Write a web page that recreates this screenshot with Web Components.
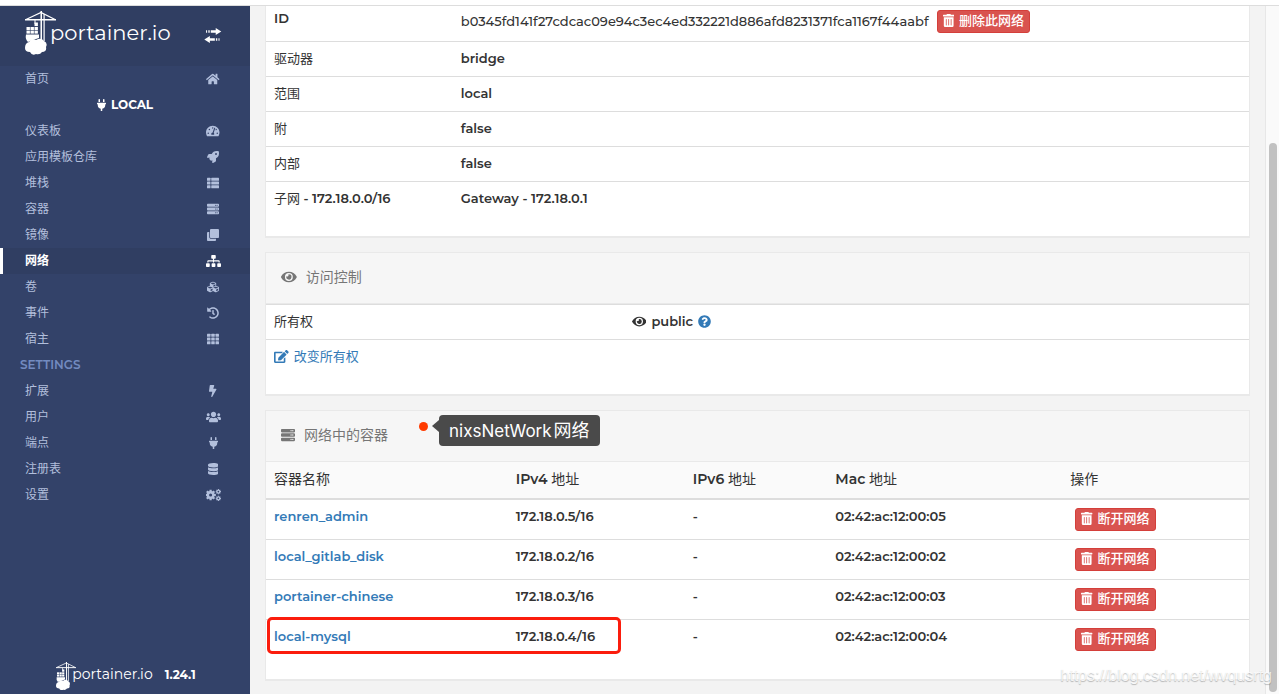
<!DOCTYPE html>
<html lang="zh-CN">
<head>
<meta charset="utf-8">
<title>Portainer</title>
<style>
html, body { margin: 0; height: 100%; }
body { font: 500 13px/16px Montserrat, Inter, "Noto Sans CJK SC", sans-serif; color: #333; background: #fff; overflow: hidden; }
.zh { font-size: 18px; margin-left: 2px; }
</style>
</head>
<body>
<app-shell>
  <side-bar slot="side"></side-bar>
  <info-card><network-details></network-details></info-card>
  <info-card icon="eye" heading="访问控制"><access-panel></access-panel></info-card>
  <info-card icon="server" heading="网络中的容器">
    <note-callout slot="note">nixsNetWork<span class="zh">网络</span></note-callout>
    <container-table></container-table>
  </info-card>
  <water-mark slot="mark">https://blog.csdn.net/wvqusrtg</water-mark>
</app-shell>
<script>
const define = (name, render) => customElements.define(name, class extends HTMLElement {
  connectedCallback() {
    if (this.shadowRoot) return;
    this.attachShadow({ mode: 'open' }).innerHTML = render(this);
  }
});

const gear = (cx, cy, r, w, t) => {
  let s = `<circle cx="${cx}" cy="${cy}" r="${r}" fill="none" stroke="currentColor" stroke-width="${w}"/>`;
  for (let i = 0; i < 8; i++) s += `<rect x="${cx - t / 2}" y="${cy - r - w / 2 - t * 0.6}" width="${t}" height="${t}" transform="rotate(${i * 45} ${cx} ${cy})"/>`;
  return s;
};
let grid = '';
for (let r = 0; r < 3; r++) for (let c = 0; c < 3; c++) grid += `<rect x="${c * 181}" y="${32 + r * 160}" width="149" height="128" rx="24"/>`;

const p = d => `<path d="${d}"/>`;
const ICONS = {
  eye: [576, p('M572.52 241.4C518.29 135.59 410.93 64 288 64S57.68 135.64 3.48 241.41a32.35 32.35 0 0 0 0 29.19C57.71 376.41 165.07 448 288 448s230.32-71.64 284.52-177.41a32.35 32.35 0 0 0 0-29.19zM288 400a144 144 0 1 1 144-144 143.93 143.93 0 0 1-144 144zm0-240a95.31 95.31 0 0 0-25.31 3.79 47.85 47.85 0 0 1-66.9 66.9A95.78 95.78 0 1 0 288 160z')],
  question: [512, p('M504 256c0 136.997-111.043 248-248 248S8 392.997 8 256C8 119.083 119.043 8 256 8s248 111.083 248 248zM262.655 90c-54.497 0-89.255 22.957-116.549 63.758-3.536 5.286-2.353 12.415 2.715 16.258l34.699 26.31c5.205 3.947 12.621 3.008 16.665-2.122 17.864-22.658 30.113-35.797 57.303-35.797 20.429 0 45.698 13.148 45.698 32.958 0 14.976-12.363 22.667-32.534 33.976C247.128 238.528 216 254.941 216 296v4c0 6.627 5.373 12 12 12h56c6.627 0 12-5.373 12-12v-1.333c0-28.462 83.186-29.647 83.186-106.667 0-58.002-60.165-102-116.531-102zM256 338c-25.365 0-46 20.635-46 46 0 25.364 20.635 46 46 46s46-20.636 46-46c0-25.365-20.635-46-46-46z')],
  edit: [576, p('M402.6 83.2l90.2 90.2c3.8 3.8 3.8 10 0 13.8L274.4 405.6l-92.8 10.3c-12.4 1.4-22.9-9.1-21.5-21.5l10.3-92.8L388.8 83.2c3.8-3.8 10-3.8 13.8 0zm162-22.9l-48.8-48.8c-15.2-15.2-39.9-15.2-55.2 0l-35.4 35.4c-3.8 3.8-3.8 10 0 13.8l90.2 90.2c3.8 3.8 10 3.8 13.8 0l35.4-35.4c15.2-15.3 15.2-40 0-55.2zM384 346.2V448H64V128h229.8c3.2 0 6.2-1.3 8.5-3.5l40-40c7.6-7.6 2.2-20.5-8.5-20.5H48C21.5 64 0 85.5 0 112v352c0 26.5 21.5 48 48 48h352c26.5 0 48-21.5 48-48V306.2c0-10.7-12.9-16-20.5-8.5l-40 40c-2.2 2.3-3.5 5.3-3.5 8.5z')],
  home: [576, p('M280.37 148.26L96 300.11V464a16 16 0 0 0 16 16l112.06-.29a16 16 0 0 0 15.92-16V368a16 16 0 0 1 16-16h64a16 16 0 0 1 16 16v95.64a16 16 0 0 0 16 16.05L464 480a16 16 0 0 0 16-16V300L295.67 148.26a12.19 12.19 0 0 0-15.3 0zM571.6 251.47L488 182.56V44.05a12 12 0 0 0-12-12h-56a12 12 0 0 0-12 12v72.61L318.47 43a48 48 0 0 0-61 0L4.34 251.47a12 12 0 0 0-1.6 16.9l25.5 31A12 12 0 0 0 45.15 301l235.22-193.74a12.19 12.19 0 0 1 15.3 0L530.9 301a12 12 0 0 0 16.9-1.6l25.5-31a12 12 0 0 0-1.7-16.93z')],
  plug: [384, p('M320,32a32,32,0,0,0-64,0v96h64Zm48,128H16A16,16,0,0,0,0,176v32a16,16,0,0,0,16,16H32v32A160.07,160.07,0,0,0,160,412.8V512h64V412.8A160.07,160.07,0,0,0,352,256V224h16a16,16,0,0,0,16-16V176A16,16,0,0,0,368,160ZM128,32a32,32,0,0,0-64,0v96h64Z')],
  gauge: [576, p('M288 32C128.94 32 0 160.94 0 320c0 52.8 14.25 102.26 39.06 144.8 5.61 9.62 16.3 15.2 27.44 15.2h443c11.14 0 21.83-5.58 27.44-15.2C561.75 422.26 576 372.8 576 320c0-159.06-128.94-288-288-288zm0 64c14.71 0 26.58 10.13 30.32 23.65-1.11 2.26-2.64 4.23-3.45 6.67l-9.22 27.67c-5.13 3.49-10.97 6.01-17.64 6.01-17.67 0-32-14.33-32-32S270.33 96 288 96zM96 384c-17.67 0-32-14.33-32-32s14.33-32 32-32 32 14.33 32 32-14.33 32-32 32zm48-160c-17.67 0-32-14.33-32-32s14.33-32 32-32 32 14.33 32 32-14.33 32-32 32zm246.77-72.41l-61.33 184C343.13 347.33 352 364.54 352 384c0 11.72-3.38 22.55-8.88 32H232.88c-5.5-9.45-8.88-20.28-8.88-32 0-33.94 26.5-61.43 59.9-63.59l61.34-184.01c4.17-12.56 17.73-19.45 30.36-15.17 12.57 4.19 19.35 17.79 15.17 30.36zm14.66 57.2l15.52-46.55c3.47-1.29 7.13-2.23 11.05-2.23 17.67 0 32 14.33 32 32s-14.33 32-32 32c-11.38-.01-20.89-6.28-26.57-15.22zM480 384c-17.67 0-32-14.33-32-32s14.33-32 32-32 32 14.33 32 32-14.33 32-32 32z')],
  rocket: [512, p('M505.12 19.09c-1.19-5.53-6.66-11-12.21-12.19C460.72 0 435.51 0 410.41 0 307.18 0 245.27 55.2 199.05 128H94.84c-16.35.02-35.56 11.88-42.89 26.48L2.52 253.3A28.4 28.4 0 0 0 0 264a24 24 0 0 0 24 24h103.82l-22.48 22.47c-11.36 11.36-13 32.26 0 45.25l50.91 50.9c11.15 11.19 32.15 13.16 45.27 0L224 384.16V488a24 24 0 0 0 24 24 28.56 28.56 0 0 0 10.71-2.52l98.73-49.39c14.63-7.29 26.5-26.5 26.5-42.86V312.8c72.6-46.31 128.04-108.41 128.04-211.1.09-25.2.09-50.4-6.86-82.61zM384.04 168A40 40 0 1 1 424.05 128 40.02 40.02 0 0 1 384.04 168z')],
  list: [512, '<rect y="32" width="149" height="128" rx="24"/><rect y="192" width="149" height="128" rx="24"/><rect y="352" width="149" height="128" rx="24"/><rect x="181" y="32" width="331" height="128" rx="24"/><rect x="181" y="192" width="331" height="128" rx="24"/><rect x="181" y="352" width="331" height="128" rx="24"/>'],
  server: [512, p('M480 160H32c-17.673 0-32-14.327-32-32V64c0-17.673 14.327-32 32-32h448c17.673 0 32 14.327 32 32v64c0 17.673-14.327 32-32 32zm-48-88c-13.255 0-24 10.745-24 24s10.745 24 24 24 24-10.745 24-24-10.745-24-24-24zm-64 0c-13.255 0-24 10.745-24 24s10.745 24 24 24 24-10.745 24-24-10.745-24-24-24zm112 248H32c-17.673 0-32-14.327-32-32v-64c0-17.673 14.327-32 32-32h448c17.673 0 32 14.327 32 32v64c0 17.673-14.327 32-32 32zm-48-88c-13.255 0-24 10.745-24 24s10.745 24 24 24 24-10.745 24-24-10.745-24-24-24zm-64 0c-13.255 0-24 10.745-24 24s10.745 24 24 24 24-10.745 24-24-10.745-24-24-24zm112 248H32c-17.673 0-32-14.327-32-32v-64c0-17.673 14.327-32 32-32h448c17.673 0 32 14.327 32 32v64c0 17.673-14.327 32-32 32zm-48-88c-13.255 0-24 10.745-24 24s10.745 24 24 24 24-10.745 24-24-10.745-24-24-24zm-64 0c-13.255 0-24 10.745-24 24s10.745 24 24 24 24-10.745 24-24-10.745-24-24-24z')],
  clone: [512, p('M464 0c26.51 0 48 21.49 48 48v288c0 26.51-21.49 48-48 48H176c-26.51 0-48-21.49-48-48V48c0-26.51 21.49-48 48-48h288M176 416c-44.112 0-80-35.888-80-80V128H48c-26.51 0-48 21.49-48 48v288c0 26.51 21.49 48 48 48h288c26.51 0 48-21.49 48-48v-48H176z')],
  sitemap: [640, p('M128 352H32c-17.67 0-32 14.33-32 32v96c0 17.67 14.33 32 32 32h96c17.67 0 32-14.33 32-32v-96c0-17.67-14.33-32-32-32zm-24-80h192v48h48v-48h192v48h48v-57.59c0-21.17-17.23-38.41-38.41-38.41H344v-64h40c17.67 0 32-14.33 32-32V32c0-17.67-14.33-32-32-32H256c-17.67 0-32 14.33-32 32v96c0 17.67 14.33 32 32 32h40v64H94.41C73.23 224 56 241.23 56 262.41V320h48v-48zm264 80h-96c-17.67 0-32 14.33-32 32v96c0 17.67 14.33 32 32 32h96c17.67 0 32-14.33 32-32v-96c0-17.67-14.33-32-32-32zm240 0h-96c-17.67 0-32 14.33-32 32v96c0 17.67 14.33 32 32 32h96c17.67 0 32-14.33 32-32v-96c0-17.67-14.33-32-32-32z')],
  cubes: [512, p('M488.6 250.2L392 214V105.5c0-15-9.3-28.4-23.4-33.7l-100-37.5c-8.1-3.1-17.1-3.1-25.3 0l-100 37.5c-14.1 5.3-23.4 18.7-23.4 33.7V214l-96.6 36.2C9.3 255.5 0 268.9 0 283.9V394c0 13.6 7.7 26.1 19.9 32.2l100 50c10.1 5.1 22.1 5.1 32.2 0l103.9-52 103.9 52c10.1 5.1 22.1 5.1 32.2 0l100-50c12.2-6.1 19.9-18.6 19.9-32.2V283.9c0-15-9.3-28.4-23.4-33.7zM358 214.8l-85 31.9v-68.2l85-37v73.3zM154 104.1l102-38.2 102 38.2v.6l-102 41.4-102-41.4v-.6zm84 291.1l-85 42.5v-79.1l85-38.8v75.4zm0-112l-102 41.4-102-41.4v-.6l102-38.2 102 38.2v.6zm240 112l-85 42.5v-79.1l85-38.8v75.4zm0-112l-102 41.4-102-41.4v-.6l102-38.2 102 38.2v.6z')],
  history: [512, p('M504 255.531c.253 136.64-111.18 248.372-247.82 248.468-59.015.042-113.223-20.53-155.822-54.911-11.077-8.94-11.905-25.541-1.839-35.607l11.267-11.267c8.609-8.609 22.353-9.551 31.891-1.984C173.062 425.135 212.781 440 256 440c101.705 0 184-82.311 184-184 0-101.705-82.311-184-184-184-48.814 0-93.149 18.969-126.068 49.932l50.754 50.754c10.08 10.08 2.941 27.314-11.313 27.314H24c-8.837 0-16-7.163-16-16V38.627c0-14.254 17.234-21.393 27.314-11.314l49.372 49.372C129.209 34.136 189.552 8 256 8c136.81 0 247.747 110.78 248 247.531zm-180.912 78.784l9.823-12.63c8.138-10.463 6.253-25.542-4.21-33.679L288 256.349V152c0-13.255-10.745-24-24-24h-16c-13.255 0-24 10.745-24 24v135.651l65.409 50.874c10.463 8.137 25.541 6.253 33.679-4.21z')],
  grid: [512, grid],
  bolt: [320, p('M296 160H180.6l42.6-129.8C227.2 15 215.7 0 200 0H56C44 0 33.8 8.9 32.2 20.8l-32 240C-1.7 275.2 9.5 288 24 288h118.7L96.6 482.5c-3.6 15.2 8 29.5 23.3 29.5 8.4 0 16.4-4.4 20.8-12l176-304c9.3-15.9-2.2-36-20.7-36z')],
  users: [640, p('M96 224c35.3 0 64-28.7 64-64s-28.7-64-64-64-64 28.7-64 64 28.7 64 64 64zm448 0c35.3 0 64-28.7 64-64s-28.7-64-64-64-64 28.7-64 64 28.7 64 64 64zm32 32h-64c-17.6 0-33.5 7.1-45.1 18.6 40.3 22.1 68.9 62 75.1 109.4h66c17.7 0 32-14.3 32-32v-32c0-35.3-28.7-64-64-64zm-256 0c61.9 0 112-50.1 112-112S381.9 32 320 32 208 82.1 208 144s50.1 112 112 112zm76.8 32h-8.3c-20.8 10-43.9 16-68.5 16s-47.6-6-68.5-16h-8.3C179.6 288 128 339.6 128 403.2V432c0 26.5 21.5 48 48 48h288c26.5 0 48-21.5 48-48v-28.8c0-63.6-51.6-115.2-115.2-115.2zm-223.7-13.4C161.5 263.1 145.6 256 128 256H64c-35.3 0-64 28.7-64 64v32c0 17.7 14.3 32 32 32h65.9c6.3-47.4 34.9-87.3 75.2-109.4z')],
  database: [448, p('M448 73.143v45.714C448 159.143 347.667 192 224 192S0 159.143 0 118.857V73.143C0 32.857 100.333 0 224 0s224 32.857 224 73.143zM448 176v102.857C448 319.143 347.667 352 224 352S0 319.143 0 278.857V176c48.125 33.143 136.208 48.572 224 48.572S399.874 209.143 448 176zm0 160v102.857C448 479.143 347.667 512 224 512S0 479.143 0 438.857V336c48.125 33.143 136.208 48.572 224 48.572S399.874 369.143 448 336z')],
  cogs: [640, gear(196, 256, 116, 100, 96) + gear(528, 112, 60, 50, 46) + gear(528, 400, 60, 50, 46)],
  trash: [448, p('M32 464a48 48 0 0 0 48 48h288a48 48 0 0 0 48-48V128H32zm272-256a16 16 0 0 1 32 0v224a16 16 0 0 1-32 0zm-96 0a16 16 0 0 1 32 0v224a16 16 0 0 1-32 0zm-96 0a16 16 0 0 1 32 0v224a16 16 0 0 1-32 0zM432 32H312l-9.4-18.7A24 24 0 0 0 281.1 0H166.8a23.72 23.72 0 0 0-21.4 13.3L136 32H16A16 16 0 0 0 0 48v32a16 16 0 0 0 16 16h416a16 16 0 0 0 16-16V48a16 16 0 0 0-16-16z')],
  swap: [600, p('M400 80V0L590 120 400 240V164H230V80zM148 80h46v84h-46zM70 80h36v84H70zM200 348v-76L10 392l190 120v-76h170v-88zM406 348h46v88h-46zM494 348h36v88h-36z')]
};

define('fa-icon', el => {
  const [w, body] = ICONS[el.getAttribute('name')];
  return `<style>
    :host { display: inline-flex; height: 1em; vertical-align: -2px; }
    svg { display: block; height: 1em; fill: currentColor; }
  </style><svg viewBox="0 0 ${w} 512" aria-hidden="true">${body}</svg>`;
});

define('brand-logo', () => `<style>
  :host { display: inline-flex; align-items: flex-start; color: #fff; font-weight: 400; font-size: var(--brand-size, 21px); line-height: 1; }
  svg { width: var(--crane-width, 31px); flex: none; margin-right: var(--brand-gap, -6px); }
  span { padding-top: var(--brand-drop, 11px); }
</style>
<svg viewBox="0 0 31 44" aria-hidden="true" fill="#fff" stroke="none">
  <path d="M1 8.5 L16 1.5 L30 8.5" fill="none" stroke="#fff" stroke-width="1.2"/>
  <rect x="0" y="8" width="31" height="1.5"/>
  <rect x="15.5" y="0" width="1.5" height="30"/><rect x="18.5" y="3" width="1.2" height="27"/>
  <rect x="9.5" y="9" width="1" height="4"/>
  <rect x="9.5" y="11.5" width="3.4" height="3.6"/>
  <rect x="1.5" y="16" width="3.4" height="3.4"/><rect x="5.5" y="16" width="3.4" height="3.4"/><rect x="9.5" y="16" width="3.4" height="3.4"/>
  <rect x="1.5" y="20" width="3.4" height="2.6"/><rect x="5.5" y="20" width="3.4" height="2.6"/><rect x="9.5" y="20" width="3.4" height="2.6"/>
  <path d="M1 23.5H14V27L8 29 3 31Q0 28 1 23.5Z"/>
  <path d="M4 31q3-4 7-2 5-3 8 1 4 2 2 6 1 5-4 5-2 3-6 2-4 2-6-2-5 0-5-4 0-5 4-6z"/>
</svg><span>portainer.io</span>`);

define('nav-item', el => {
  const on = el.hasAttribute('active');
  return `<style>
    :host { display: block; }
    a { display: grid; grid-template-columns: 1fr 24px; align-items: center; height: 26px; padding: 0 25px; box-sizing: border-box; color: #b2bfdc; font-size: 12px; font-weight: 400; text-decoration: none; }
    a.on { color: #fff; background: #303e62; border-left: 3px solid #fff; padding-left: 22px; font-weight: 700; }
    fa-icon { justify-self: center; }
  </style><a href="#" class="${on ? 'on' : ''}"><slot></slot><fa-icon name="${el.getAttribute('icon')}"></fa-icon></a>`;
});

define('side-bar', () => `<style>
  :host { display: flex; flex-direction: column; background: #334269; height: 100%; }
  header { display: flex; justify-content: space-between; align-items: flex-start; height: 60px; box-sizing: border-box; padding: 5px 28px 0 25px; background: #303e62; }
  header button { display: flex; margin: 0; padding: 17px 0 0; border: 0; background: none; color: #fff; font-size: 15px; }
  header a, footer a { text-decoration: none; display: flex; }
  nav { flex: 1; }
  .env { display: flex; justify-content: center; align-items: center; gap: 5px; height: 26px; color: #fff; font-size: 12px; font-weight: 700; }
  .group { height: 26px; line-height: 26px; padding-left: 20px; color: #738bc0; font-size: 12px; font-weight: 600; }
  footer { display: flex; justify-content: center; gap: 12px; color: #fff; font-size: 12px; font-weight: 700; line-height: 26px; padding: 0 0 4px 2px; --brand-size: 14px; --crane-width: 20px; --brand-gap: -4px; --brand-drop: 5px; }
</style>
<header><a href="#"><brand-logo></brand-logo></a><button type="button" aria-label="切换"><fa-icon name="swap"></fa-icon></button></header>
<nav>
  <nav-item icon="home">首页</nav-item>
  <div class="env"><fa-icon name="plug"></fa-icon>LOCAL</div>
  <nav-item icon="gauge">仪表板</nav-item>
  <nav-item icon="rocket">应用模板仓库</nav-item>
  <nav-item icon="list">堆栈</nav-item>
  <nav-item icon="server">容器</nav-item>
  <nav-item icon="clone">镜像</nav-item>
  <nav-item icon="sitemap" active>网络</nav-item>
  <nav-item icon="cubes">卷</nav-item>
  <nav-item icon="history">事件</nav-item>
  <nav-item icon="grid">宿主</nav-item>
  <div class="group">SETTINGS</div>
  <nav-item icon="bolt">扩展</nav-item>
  <nav-item icon="users">用户</nav-item>
  <nav-item icon="plug">端点</nav-item>
  <nav-item icon="database">注册表</nav-item>
  <nav-item icon="cogs">设置</nav-item>
</nav>
<footer><a href="#"><brand-logo></brand-logo></a><span>1.24.1</span></footer>`);

define('info-card', el => {
  const h = el.getAttribute('heading');
  return `<style>
    :host { display: block; background: #fff; border: 1px solid #e9e9e9; border-bottom-width: 2px; padding-bottom: 20px; margin-bottom: 14px; }
    :host(:first-of-type) { border-top: 0; }
    header { position: relative; display: flex; align-items: center; gap: 9px; height: 50px; box-sizing: content-box; padding: 0 15px; background: #f6f6f6; border-bottom: 1px solid #e9e9e9; color: #767676; }
    h2 { margin: 0; padding-bottom: 2px; font-size: 14px; line-height: 20px; font-weight: 400; }
    fa-icon { font-size: 14px; padding-bottom: 2px; }
  </style>${h ? `<header><fa-icon name="${el.getAttribute('icon')}"></fa-icon><h2>${h}</h2><slot name="note"></slot></header>` : ''}<slot></slot>`;
});

define('danger-button', () => `<style>
  :host { display: inline-block; vertical-align: top; }
  button { display: flex; align-items: center; gap: 5px; height: 23px; box-sizing: border-box; padding: 0 5px 3px; margin: 0; border: 1px solid #d43f3a; border-radius: 3px; background: #d9534f; color: #fff; font: inherit; font-weight: 500; }
</style><button type="button"><fa-icon name="trash"></fa-icon><slot></slot></button>`);

const TABLE = `
  :host { display: block; }
  table { width: 100%; table-layout: fixed; border-collapse: separate; border-spacing: 0; }
  th, td { padding: 8px 8px 10px; text-align: left; vertical-align: top; font-weight: 400; border-top: 1px solid #ddd; }
  b { font-weight: 600; }
  a { color: #337ab7; text-decoration: none; }`;

define('network-details', () => `<style>${TABLE}
  th { width: 19%; box-sizing: border-box; }
  tr:first-child > * { border-top: 0; padding-top: 4px; padding-bottom: 8px; }
  .id { display: flex; gap: 8px; align-items: center; }
  .id b { font-weight: 500; padding-bottom: 2px; }
</style>
<table>
  <tr><th scope="row"><b>ID</b></th><td><div class="id"><b>b0345fd141f27cdcac09e94c3ec4ed332221d886afd8231371fca1167f44aabf</b><danger-button>删除此网络</danger-button></div></td></tr>
  <tr><th scope="row">驱动器</th><td><b>bridge</b></td></tr>
  <tr><th scope="row">范围</th><td><b>local</b></td></tr>
  <tr><th scope="row">附</th><td><b>false</b></td></tr>
  <tr><th scope="row">内部</th><td><b>false</b></td></tr>
  <tr><th scope="row">子网 <b>- 172.18.0.0/16</b></th><td><b>Gateway - 172.18.0.1</b></td></tr>
</table>`);

define('access-panel', () => `<style>${TABLE}
  th { width: 36.4%; box-sizing: border-box; }
  td div, a { display: flex; align-items: center; gap: 5px; }
  .help { color: #337ab7; }
</style>
<table>
  <tr><th scope="row">所有权</th><td><div><fa-icon name="eye"></fa-icon><b>public</b><fa-icon class="help" name="question"></fa-icon></div></td></tr>
  <tr><td colspan="2"><a href="#"><fa-icon name="edit"></fa-icon>改变所有权</a></td></tr>
</table>`);

const ROWS = [['renren_admin', 5], ['local_gitlab_disk', 2], ['portainer-chinese', 3], ['local-mysql', 4]];
define('container-table', () => `<style>${TABLE}
  thead th { font-size: 14px; line-height: 18px; background: #fafafa; border-top: 0; border-bottom: 2px solid #ddd; }
  tbody tr:first-child td { border-top: 0; }
  td:last-child { padding-bottom: 8px; }
  danger-button { margin-left: 5px; }
  tr.marked { position: relative; }
  .ring { position: absolute; left: 1px; top: -2px; width: 36%; height: 37px; box-sizing: border-box; border: 3px solid #fb1d0d; border-radius: 5px; pointer-events: none; }
</style>
<table>
  <colgroup><col style="width:24.6%"><col style="width:18%"><col style="width:14.5%"><col style="width:23.9%"><col></colgroup>
  <thead><tr><th>容器名称</th><th><b>IPv4</b> 地址</th><th><b>IPv6</b> 地址</th><th><b>Mac</b> 地址</th><th>操作</th></tr></thead>
  <tbody>${ROWS.map(([n, i]) => `<tr class="${i === 4 ? 'marked' : ''}"><td><a href="#"><b>${n}</b></a>${i === 4 ? '<span class="ring"></span>' : ''}</td><td><b>172.18.0.${i}/16</b></td><td><b>-</b></td><td><b>02:42:ac:12:00:0${i}</b></td><td><danger-button>断开网络</danger-button></td></tr>`).join('')}</tbody>
</table>`);

define('note-callout', () => `<style>
  :host { position: absolute; left: 153px; top: 4px; display: flex; align-items: flex-start; color: #fff; font: 400 17px/31px Inter, "Noto Sans CJK SC", sans-serif; white-space: nowrap; }
  i { width: 9px; height: 9px; border-radius: 50%; background: #ff3b00; margin: 7px 4px 0 0; }
  u { width: 0; height: 0; border: 6px solid transparent; border-left: 0; border-right: 7px solid #4a4a4a; margin-top: 5px; }
  p { margin: 0; height: 31px; background: #4a4a4a; border-radius: 4px; padding: 0 10px; }
</style><i></i><u></u><p><slot></slot></p>`);

define('water-mark', () => `<style>
  :host { position: absolute; right: 7px; bottom: 8px; font: 400 16px/20px "Liberation Sans", sans-serif; color: rgba(255,255,255,.8); text-shadow: 0 1px 1px rgba(0,0,0,.25); pointer-events: none; }
</style><slot></slot>`);

define('app-shell', () => `<style>
  :host { position: relative; display: grid; grid-template: 6px minmax(0, 1fr) / 250px minmax(0, 1fr) 14px; height: 100vh; }
  .top { grid-column: 1 / -1; box-sizing: border-box; background: #fff; border-bottom: 1px solid #ddd; }
  main { background: #f3f3f3; padding: 0 15px; overflow: hidden; }
  .scroll { display: flex; flex-direction: column; background: #fafafa; border-left: 1px solid #e7e7e7; padding: 0 2px 2px 3px; }
  .scroll::before { content: ""; flex: 1; }
  .scroll::after { content: ""; flex: 4; background: #c1c1c1; border-radius: 4px; }
</style>
<div class="top"></div>
<slot name="side"></slot>
<main><slot></slot></main>
<div class="scroll"></div>
<slot name="mark"></slot>`);
</script>
</body>
</html>
